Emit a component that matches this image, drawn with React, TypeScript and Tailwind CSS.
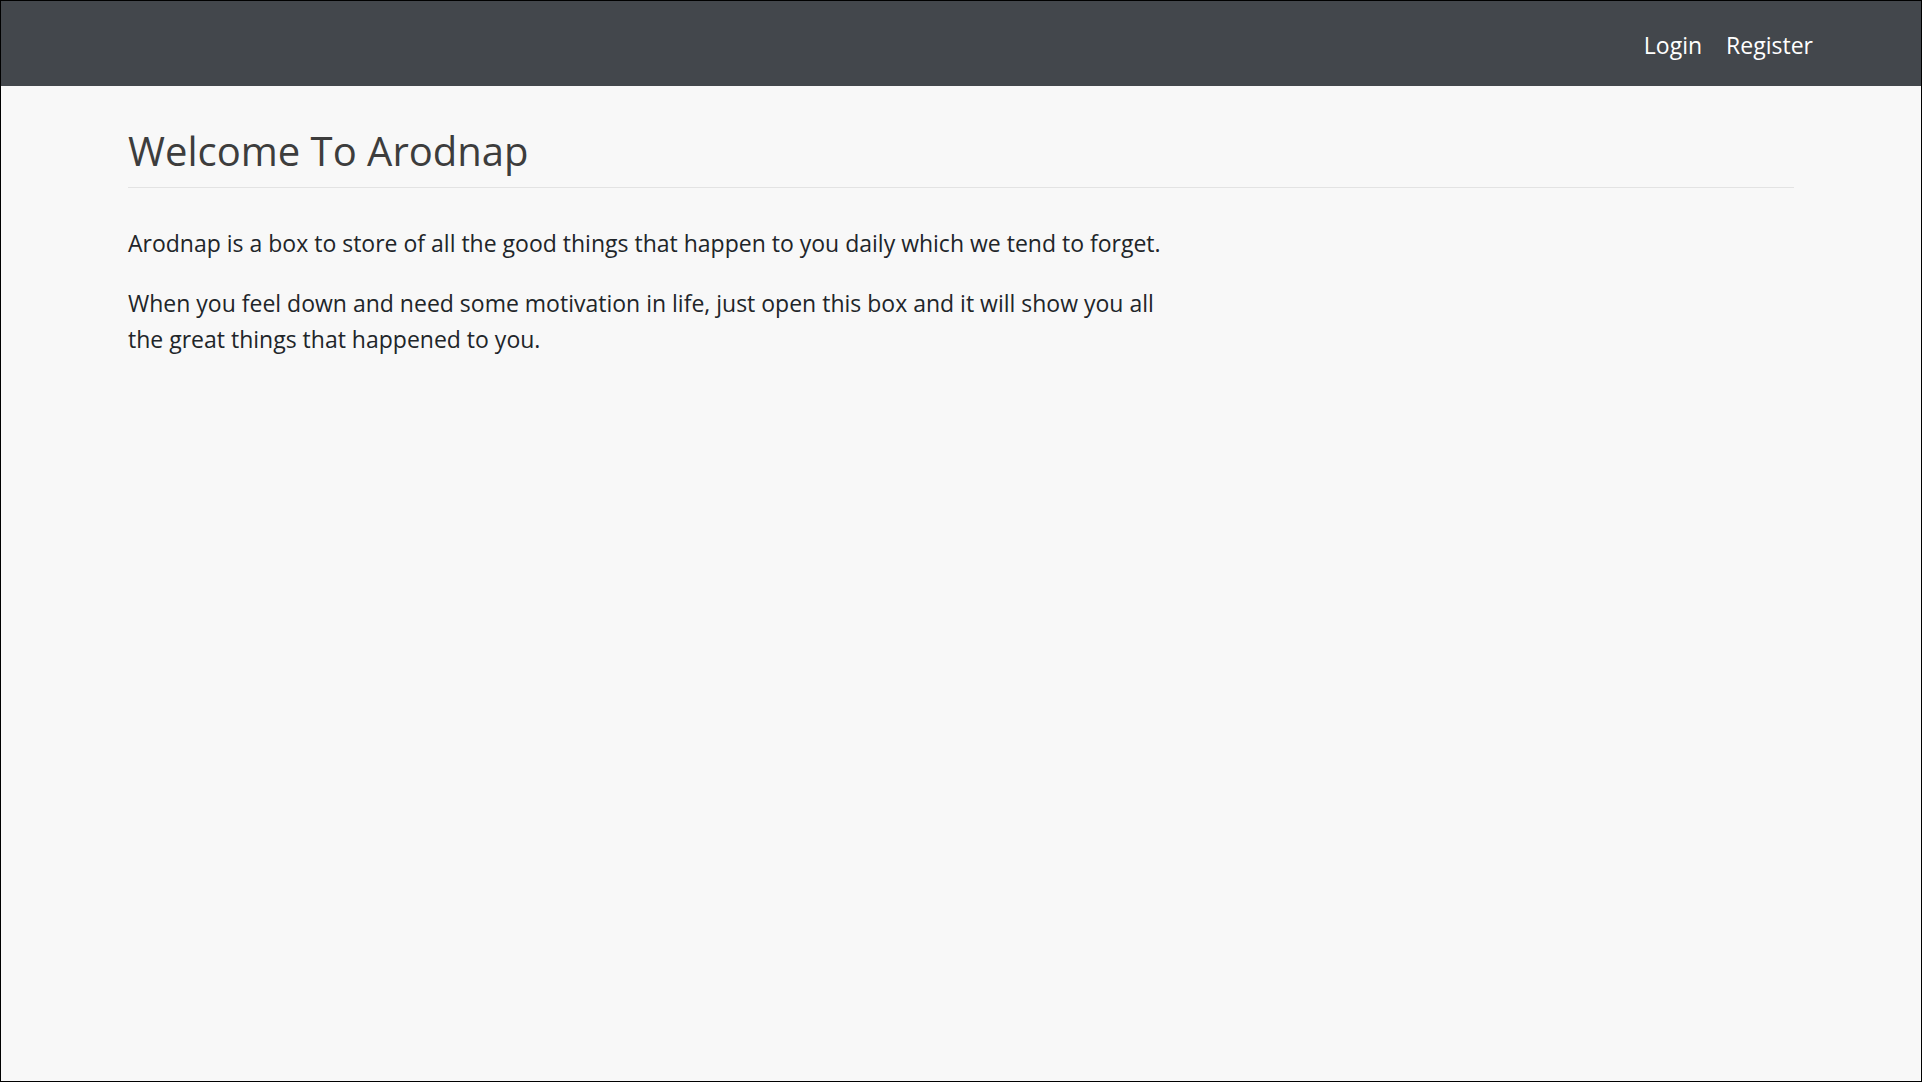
export default function App() {
  return (
    <div
      className="w-[1922px] h-[1082px] border border-black bg-[#f8f8f8] flex flex-col overflow-hidden"
      style={{ fontFamily: '"Open Sans", "Noto Sans", sans-serif' }}
    >
      <nav className="h-[85px] shrink-0 bg-[#43474c] flex items-center justify-end pr-[96px] pt-[4px]">
        <a className="text-white text-[23px] px-[12px]" href="#">Login</a>
        <a className="text-white text-[23px] px-[12px]" href="#">Register</a>
      </nav>
      <main className="pl-[127px] pr-[127px]">
        <h1 className="mt-[41px] text-[40px] leading-[1.2] text-[#3d3d3d] pb-[12px] border-b border-[#e3e3e3]">
          Welcome To Arodnap
        </h1>
        <div className="max-w-[1050px] mt-[38px] text-[23px] leading-[35.5px] text-[#212529]">
          <p className="mb-[24.5px]">
            Arodnap is a box to store of all the good things that happen to you daily which we tend to forget.
          </p>
          <p>
            When you feel down and need some motivation in life, just open this box and it will show you all the great things that happened to you.
          </p>
        </div>
      </main>
    </div>
  );
}
